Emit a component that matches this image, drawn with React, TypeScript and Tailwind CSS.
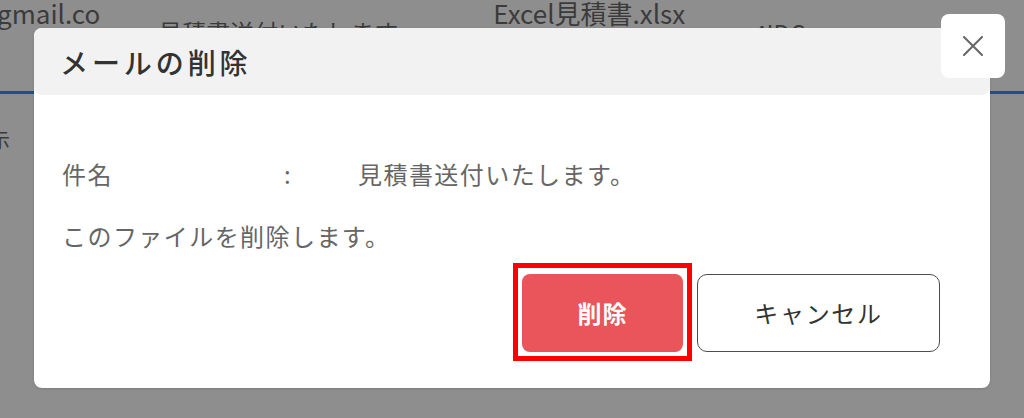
import { useState } from "react";

const font = { fontFamily: '"Noto Sans CJK JP", "Noto Sans", sans-serif' };

function CloseIcon() {
  return (
    <svg width="20" height="20" viewBox="0 0 20 20" fill="none">
      <path d="M1 1L19 19M19 1L1 19" stroke="#666" strokeWidth="2" strokeLinecap="round" />
    </svg>
  );
}

export default function App() {
  const [open, setOpen] = useState(true);

  return (
    <div
      className="relative w-[1024px] h-[418px] overflow-hidden bg-[#8e8e8e] text-[#3b3b3b]"
      style={font}
    >
      {/* page behind the overlay */}
      <div className="flex h-[91px] items-start text-[26px] leading-none">
        <span className="ml-[-3px]">gmail.co</span>
        <span className="ml-[58px] mt-[20px] text-[24px]">見積書送付いたします</span>
        <span className="ml-[95px]">Excel見積書.xlsx</span>
        <span className="ml-[68px] mt-[21px] text-[24px]">4IDC...</span>
      </div>
      <div className="h-[3px] bg-[#1d4f8f]" />
      <div className="ml-[-10px] mt-[36px] text-[20px] leading-none">示</div>

      {open && (
        <>
          <div className="absolute left-[34px] top-[28px] w-[956px] h-[360px] rounded-lg bg-white flex flex-col shadow-sm">
            <div className="h-[67px] rounded-lg bg-[#f2f2f2] flex items-center pl-[26px]">
              <h2 className="text-[28px] font-medium tracking-[0.14em] text-[#333]">
                メールの削除
              </h2>
            </div>
            <div className="flex flex-col pl-[28px] pr-[50px] pt-[63px] text-[24px] leading-[32px] tracking-[0.06em] text-[#666]">
              <div className="flex">
                <span className="w-[222px]">件名</span>
                <span className="w-[74px]">:</span>
                <span>見積書送付いたします。</span>
              </div>
              <div className="mt-[30px]">このファイルを削除します。</div>
              <div className="mt-[11px] flex justify-end items-start">
                <div className="border-[5px] border-[#ff0000] pl-[4px] pr-[4px] pt-[6px] pb-[4px]">
                  <button className="w-[161px] h-[78px] rounded-lg bg-[#e9555a] text-white text-[24px] font-bold tracking-[0.04em]">
                    削除
                  </button>
                </div>
                <button
                  onClick={() => setOpen(false)}
                  className="ml-[5px] mt-[11px] w-[243px] h-[78px] rounded-[10px] border-[1.5px] border-[#4d4d4d] bg-white text-[24px] font-normal tracking-[0.07em] text-[#333]"
                >
                  キャンセル
                </button>
              </div>
            </div>
          </div>
          <button
            onClick={() => setOpen(false)}
            className="absolute left-[941px] top-[14px] w-[64px] h-[64px] rounded-lg bg-white flex items-center justify-center"
          >
            <CloseIcon />
          </button>
        </>
      )}
    </div>
  );
}
